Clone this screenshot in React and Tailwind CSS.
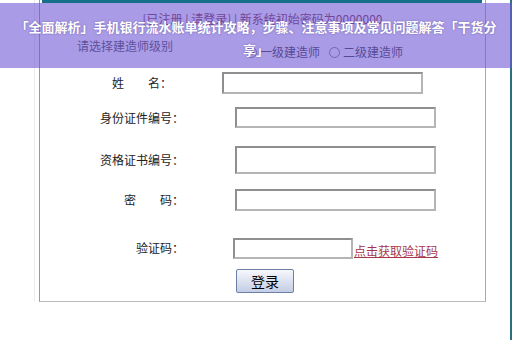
import React from "react";

const cjk = { fontFamily: '"Noto Sans CJK SC", "Liberation Sans", sans-serif' };

function Field({ label, labelW, gap, inputW, inputH, mt, children }) {
  return (
    <div className="flex items-center" style={{ marginTop: mt }}>
      <span className="text-right text-[12px] leading-4 text-[#222]" style={{ width: labelW }}>{label}</span>
      <div
        className="border-2 border-t-[#8f8f8f] border-l-[#8f8f8f] border-r-[#b5b5b5] border-b-[#b5b5b5] bg-white"
        style={{ marginLeft: gap, width: inputW, height: inputH }}
      />
      {children}
    </div>
  );
}

function Radio({ checked }) {
  return (
    <span className="w-[11px] h-[11px] rounded-full border border-[#777] bg-white flex items-center justify-center">
      {checked && <span className="w-[5px] h-[5px] rounded-full bg-[#333]" />}
    </span>
  );
}

export default function App() {
  return (
    <div className="relative w-[512px] h-[340px] overflow-hidden bg-white" style={cjk}>
      <div className="flex h-full">
        {/* left gutter */}
        <div className="w-[39px] flex justify-end pr-[4px]">
          <div className="w-px h-[301px] bg-[#ececec]" />
        </div>

        {/* form panel */}
        <div className="w-[447px] h-[302px] border-l border-r border-b border-l-[#999] border-r-[#aaa] border-b-[#bbb] flex flex-col">
          <div className="h-[3px] ml-[2px] mr-[3px] bg-[#17708a]" />
          <div className="h-[32px] flex items-center justify-center text-[12px] text-[#7a2b3a]">
            [已注册 | 请登录] | 新系统初始密码为0000000
          </div>
          <div className="h-[33px] flex items-start">
            <span className="pl-[37px] pt-[3px] text-[12px] leading-4 text-[#444]">请选择建造师级别</span>
            <div className="ml-[73px] pt-[9px] flex items-center gap-[3px] text-[12px] leading-4 text-[#333]">
              <Radio checked />
              <span>一级建造师</span>
              <span className="ml-[6px]"><Radio /></span>
              <span>二级建造师</span>
            </div>
          </div>

          <Field label="姓　　名：" labelW={132} gap={50} inputW={201} inputH={22} mt={4} />
          <Field label="身份证件编号：" labelW={144} gap={51} inputW={201} inputH={21} mt={13} />
          <Field label="资格证书编号：" labelW={144} gap={51} inputW={201} inputH={28} mt={18} />
          <Field label="密　　码：" labelW={144} gap={51} inputW={201} inputH={22} mt={15} />
          <Field label="验证码：" labelW={144} gap={49} inputW={120} inputH={21} mt={26}>
            <span className="ml-px mt-[6px] text-[12px] leading-4 text-[#a8364a] underline">点击获取验证码</span>
          </Field>

          <div className="mt-[9px] ml-[196px]">
            <button className="w-[58px] h-[24px] rounded-[2px] border border-[#6d7fa3] bg-gradient-to-b from-[#f7f8fc] to-[#c3cde5] text-[14px] leading-none text-black">
              登录
            </button>
          </div>
        </div>

        {/* right gutter */}
        <div className="flex-1 flex justify-end">
          <div className="w-[2px] h-full bg-[#2c6f80]" />
        </div>
      </div>

      {/* title overlay */}
      <div className="absolute left-0 right-0 top-[3px] h-[65px] bg-[rgba(112,88,213,0.6)] px-[14px] pt-[12px] text-center">
        <p className="text-[13px] leading-[23px] font-bold text-white [text-shadow:0_0_2px_rgba(60,40,120,0.5)]">
          「全面解析」手机银行流水账单统计攻略，步骤、注意事项及常见问题解答「干货分享」
        </p>
      </div>
    </div>
  );
}
